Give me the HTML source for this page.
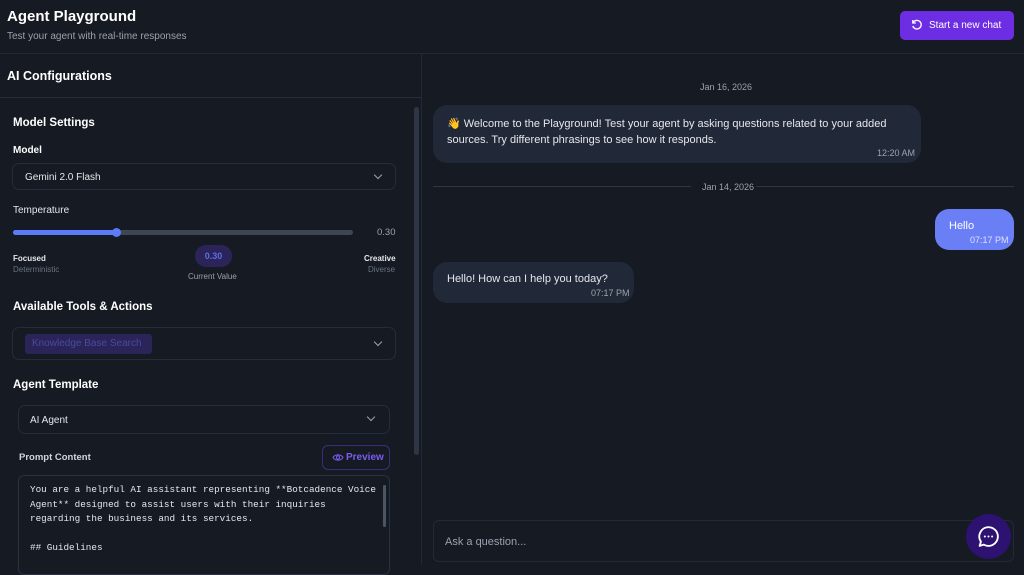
<!DOCTYPE html>
<html><head><meta charset="utf-8"><style>
*{box-sizing:border-box;margin:0;padding:0}
body{width:1024px;height:565px;overflow:hidden;background:#151a23;font-family:"Liberation Sans",sans-serif;color:#e5e7eb;position:relative}
.a{position:absolute}
.sel{position:absolute;border:1px solid #252c3a;border-radius:7px;background:#151a23}
.chev{position:absolute;width:6px;height:6px;border-right:1.3px solid #9ca3af;border-bottom:1.3px solid #9ca3af;transform:rotate(45deg)}
.b{font-weight:bold}
.bub{position:absolute;background:#212938;border-radius:14px;font-size:11px;color:#e5e7eb}
.t{position:absolute;font-size:9px;color:#9ca3af}
</style></head><body>
<div class="a b" style="left:7px;top:8px;font-size:15px;color:#fff">Agent Playground</div>
<div class="a" style="left:7px;top:31px;font-size:10px;color:#9ca3af">Test your agent with real-time responses</div>
<div class="a" style="left:900px;top:11px;width:114px;height:29px;background:#6d2ee3;border-radius:5px;color:#fff;font-size:10px;line-height:29px;padding-left:29px">Start a new chat
<svg class="a" style="left:11px;top:8px" width="12" height="12" viewBox="0 0 12 12"><path d="M2.2 3.5A4.3 4.3 0 1 1 1.8 7" fill="none" stroke="#fff" stroke-width="1.3"/><path d="M1.8 1v3h3" fill="none" stroke="#fff" stroke-width="1.3"/></svg></div>
<div class="a" style="left:0;top:53px;width:1024px;height:1px;background:#222835"></div>
<div class="a" style="left:421px;top:54px;width:1px;height:511px;background:#222835"></div>
<div class="a b" style="left:7px;top:69px;font-size:12.5px;color:#fff">AI Configurations</div>
<div class="a" style="left:0;top:97px;width:421px;height:1px;background:#252c3a"></div>
<div class="a" style="left:414px;top:107px;width:5px;height:348px;background:#2e3544;border-radius:3px"></div>
<div class="a b" style="left:13px;top:117px;font-size:11.5px;color:#fff">Model Settings</div>
<div class="a b" style="left:13px;top:145px;font-size:10px;color:#fff">Model</div>
<div class="sel" style="left:12px;top:163px;width:384px;height:27px"><span class="a" style="left:12px;top:8px;font-size:10px">Gemini 2.0 Flash</span><div class="chev" style="left:362px;top:8px"></div></div>
<div class="a" style="left:13px;top:205px;font-size:10px;color:#e5e7eb">Temperature</div>
<div class="a" style="left:13px;top:230px;width:340px;height:5px;background:#3f4653;border-radius:3px"></div>
<div class="a" style="left:13px;top:230px;width:104px;height:5px;background:#5b7cf6;border-radius:3px"></div>
<div class="a" style="left:112px;top:228px;width:9px;height:9px;background:#5b7cf6;border-radius:50%"></div>
<div class="a" style="left:377px;top:227px;font-size:9.5px;color:#9ca3af">0.30</div>
<div class="a b" style="left:13px;top:254px;font-size:8px">Focused</div>
<div class="a" style="left:13px;top:265px;font-size:8px;color:#6b7280">Deterministic</div>
<div class="a b" style="left:195px;top:245px;width:37px;height:22px;border-radius:11px;background:#2b2458;color:#5b6ee8;font-size:9px;text-align:center;line-height:22px">0.30</div>
<div class="a" style="left:188px;top:272px;font-size:8px;color:#9ca3af">Current Value</div>
<div class="a b" style="left:364px;top:254px;font-size:8px">Creative</div>
<div class="a" style="left:368px;top:265px;font-size:8px;color:#6b7280">Diverse</div>
<div class="a b" style="left:13px;top:301px;font-size:11.5px;color:#fff">Available Tools &amp; Actions</div>
<div class="sel" style="left:12px;top:327px;width:384px;height:33px"><span class="a" style="left:12px;top:6px;width:127px;height:20px;background:#2b2458;border-radius:3px;color:#4a4a9e;font-size:10px;line-height:20px;padding-left:7px">Knowledge Base Search</span><div class="chev" style="left:362px;top:11px"></div></div>
<div class="a b" style="left:13px;top:379px;font-size:11.5px;color:#fff">Agent Template</div>
<div class="sel" style="left:18px;top:405px;width:372px;height:29px"><span class="a" style="left:11px;top:9px;font-size:10px">AI Agent</span><div class="chev" style="left:349px;top:8px"></div></div>
<div class="a b" style="left:19px;top:452px;font-size:9.5px;color:#d1d5db">Prompt Content</div>
<div class="a" style="left:322px;top:445px;width:68px;height:25px;border:1px solid #3b2d7a;border-radius:6px;color:#7c5cf0;font-size:10px;font-weight:bold;line-height:23px;padding-left:23px">Preview
<svg class="a" style="left:9px;top:7px" width="12" height="9" viewBox="0 0 12 9"><path d="M1 4.5C3 1 9 1 11 4.5 9 8 3 8 1 4.5Z" fill="none" stroke="#7c5cf0" stroke-width="1"/><circle cx="6" cy="4.5" r="1.6" fill="none" stroke="#7c5cf0"/></svg></div>
<div class="a" style="left:18px;top:475px;width:372px;height:100px;border:1px solid #2a3140;border-radius:6px"></div>
<div class="a" style="left:383px;top:485px;width:3px;height:42px;background:#4b5563;border-radius:2px"></div>
<div class="a" style="left:30px;top:483px;font-family:'Liberation Mono',monospace;font-size:9.3px;line-height:14.5px;color:#e5e7eb;white-space:pre">You are a helpful AI assistant representing **Botcadence Voice
Agent** designed to assist users with their inquiries
regarding the business and its services.

## Guidelines</div>
<div class="t" style="left:700px;top:82px">Jan 16, 2026</div>
<div class="bub" style="left:433px;top:105px;width:488px;height:58px;padding:11px 0 0 14px;line-height:16px">👋 Welcome to the Playground! Test your agent by asking questions related to your added<br>sources. Try different phrasings to see how it responds.</div>
<div class="t" style="left:877px;top:148px">12:20 AM</div>
<div class="a" style="left:433px;top:186px;width:258px;height:1px;background:#2e3544"></div>
<div class="a" style="left:710px;top:186px;width:304px;height:1px;background:#2e3544"></div>
<div class="t" style="left:700px;top:182px;background:#151a23;padding:0 2px">Jan 14, 2026</div>
<div class="bub" style="left:935px;top:209px;width:79px;height:41px;background:#6a7ff6;color:#fff;padding:11px 0 0 14px">Hello</div>
<div class="t" style="left:970px;top:235px;color:#dbe1ff">07:17 PM</div>
<div class="bub" style="left:433px;top:262px;width:201px;height:41px;padding:11px 0 0 14px">Hello! How can I help you today?</div>
<div class="t" style="left:591px;top:288px">07:17 PM</div>
<div class="a" style="left:433px;top:520px;width:581px;height:42px;border:1px solid #232a37;border-radius:6px;font-size:11px;color:#9ca3af;padding:15px 0 0 11px">Ask a question...</div>
<div class="a" style="left:966px;top:514px;width:45px;height:45px;border-radius:50%;background:#2d1271"></div>
<svg class="a" style="left:976px;top:524px" width="25" height="25" viewBox="0 0 24 24"><path d="M12 3a9 9 0 0 1 0 18c-1.7 0-3.2-.4-4.5-1.2L3.5 21l1.2-4A9 9 0 0 1 12 3Z" fill="none" stroke="#fff" stroke-width="1.8" stroke-linejoin="round"/><circle cx="8.5" cy="12" r="1" fill="#fff"/><circle cx="12" cy="12" r="1" fill="#fff"/><circle cx="15.5" cy="12" r="1" fill="#fff"/></svg>
</body></html>
